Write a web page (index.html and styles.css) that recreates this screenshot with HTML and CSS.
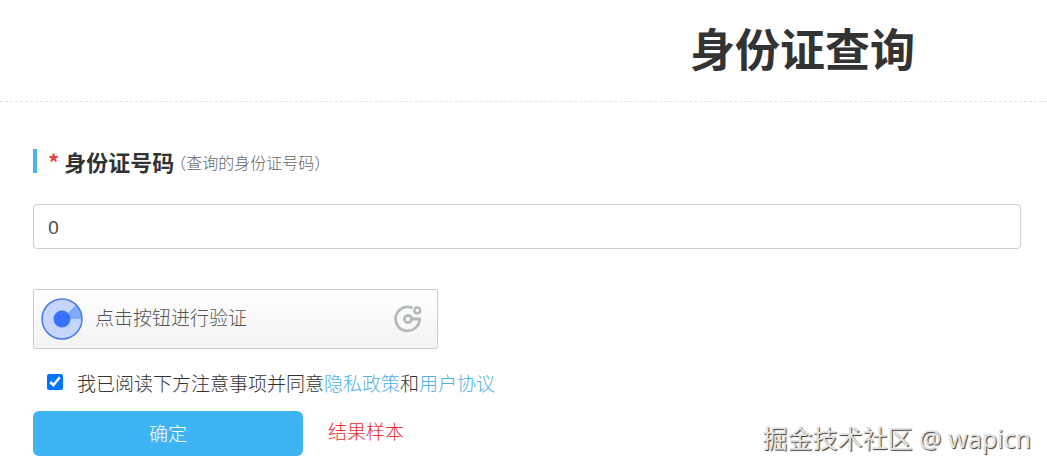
FILE: index.html
```
<!DOCTYPE html>
<html lang="zh-CN">
<head>
<meta charset="utf-8">
<meta name="viewport" content="width=device-width, initial-scale=1">
<title>身份证查询</title>
<link rel="stylesheet" href="styles.css">
</head>
<body>
<header class="page-header">
  <h1 class="page-title">身份证查询</h1>
</header>
<form class="query-form">
  <div class="field-heading">
    <label class="field-label" for="id-number"><span class="required">*</span> 身份证号码</label>
    <span class="field-note">（查询的身份证号码）</span>
  </div>
  <input class="field-input" id="id-number" type="text" value="0">
  <button class="captcha" type="button">
    <svg class="captcha-dot" viewBox="0 0 42 42" aria-hidden="true">
      <circle cx="21" cy="21" r="20" fill="#c5d5fb"/>
      <path d="M21 21L35 7A20 20 0 0 1 41 21Z" fill="#80aaff"/>
      <circle cx="21" cy="21" r="20" fill="none" stroke="#4a78ee" stroke-width="1.5"/>
      <circle cx="21" cy="21" r="8.5" fill="#3873ff"/>
    </svg>
    <span class="captcha-text">点击按钮进行验证</span>
    <svg class="captcha-logo" viewBox="0 0 28 28" fill="none" stroke="#b3b9bb" stroke-width="2.8" aria-hidden="true">
      <path d="M18.5 3A12 12 0 1 0 25.6 14H17.5"/>
      <circle cx="14" cy="14" r="3.6"/>
      <circle cx="23.2" cy="5.4" r="2.9" stroke-width="2.4"/>
    </svg>
  </button>
  <div class="agreement">
    <input class="agree-box" id="agree" type="checkbox" checked>
    <div><label for="agree">我已阅读下方注意事项并同意</label><a href="#privacy">隐私政策</a>和<a href="#terms">用户协议</a></div>
  </div>
  <div class="actions">
    <button class="submit" type="submit">确定</button>
    <a class="sample" href="#sample">结果样本</a>
  </div>
</form>
<div class="watermark">掘金技术社区 @ wapicn</div>
</body>
</html>
```
FILE: styles.css
```
* {
  box-sizing: border-box;
}

body {
  margin: 0;
  background: #fff;
  color: #333;
  font: 300 19px/28px "Noto Sans CJK SC", sans-serif;
}

a {
  color: #4fb0e8;
  text-decoration: none;
}

button,
input {
  font: inherit;
}

.page-header {
  padding: 15px 0 21px;
  border-bottom: 1px dashed #e2e2e2;
}

.page-title {
  margin: 0 132px 0 0;
  font-size: 45px;
  font-weight: 700;
  line-height: 65px;
  text-align: right;
}

.query-form {
  padding: 45px 26px 14px 33px;
}

.field-heading {
  display: flex;
  align-items: center;
  height: 28px;
  margin-bottom: 29px;
}

.field-label {
  padding-left: 11px;
  border-left: 4px solid #48b3e8;
  font-size: 22px;
  font-weight: 700;
  line-height: 24px;
}

.required {
  color: #f03e48;
}

.field-note {
  margin-left: -4px;
  padding-top: 2px;
  color: #666;
  font-size: 16px;
}

.field-input {
  display: block;
  width: 100%;
  height: 45px;
  margin-bottom: 40px;
  padding: 0 14px;
  border: 1px solid #ccc;
  border-radius: 4px;
  background: #fff;
  color: #444;
  font-family: "Open Sans", "Noto Sans CJK SC", sans-serif;
  font-weight: 400;
}

.captcha {
  display: flex;
  align-items: center;
  gap: 12px;
  width: 405px;
  max-width: 100%;
  height: 60px;
  margin-bottom: 20px;
  padding: 0 15px 0 7px;
  border: 1px solid #ccc;
  border-radius: 2px;
  background: linear-gradient(#fff, #f3f3f3);
  color: #555;
}

.captcha-dot {
  width: 42px;
  height: 42px;
}

.captcha-text {
  flex: 1;
  padding-bottom: 4px;
  text-align: left;
}

.captcha-logo {
  width: 28px;
  height: 28px;
}

.agreement {
  display: flex;
  align-items: center;
  gap: 14px;
  padding-left: 14px;
  margin-bottom: 14px;
}

.agree-box {
  width: 16px;
  height: 16px;
  margin: 0 0 2px;
  accent-color: #0075ff;
}

.actions {
  display: flex;
  align-items: center;
  gap: 25px;
}

.submit {
  width: 270px;
  height: 45px;
  padding: 0 0 2px;
  border: 0;
  border-radius: 6px;
  background: #3eb4f5;
  color: #fff;
}

.sample {
  padding-bottom: 6px;
  color: #e82c30;
}

.watermark {
  position: absolute;
  right: 16px;
  bottom: 14px;
  color: #e4e4e4;
  font-family: "Noto Sans", "Noto Sans CJK SC", sans-serif;
  font-size: 25px;
  font-weight: 400;
  line-height: 36px;
  text-shadow: 1px 1px 1px #333;
}
```
